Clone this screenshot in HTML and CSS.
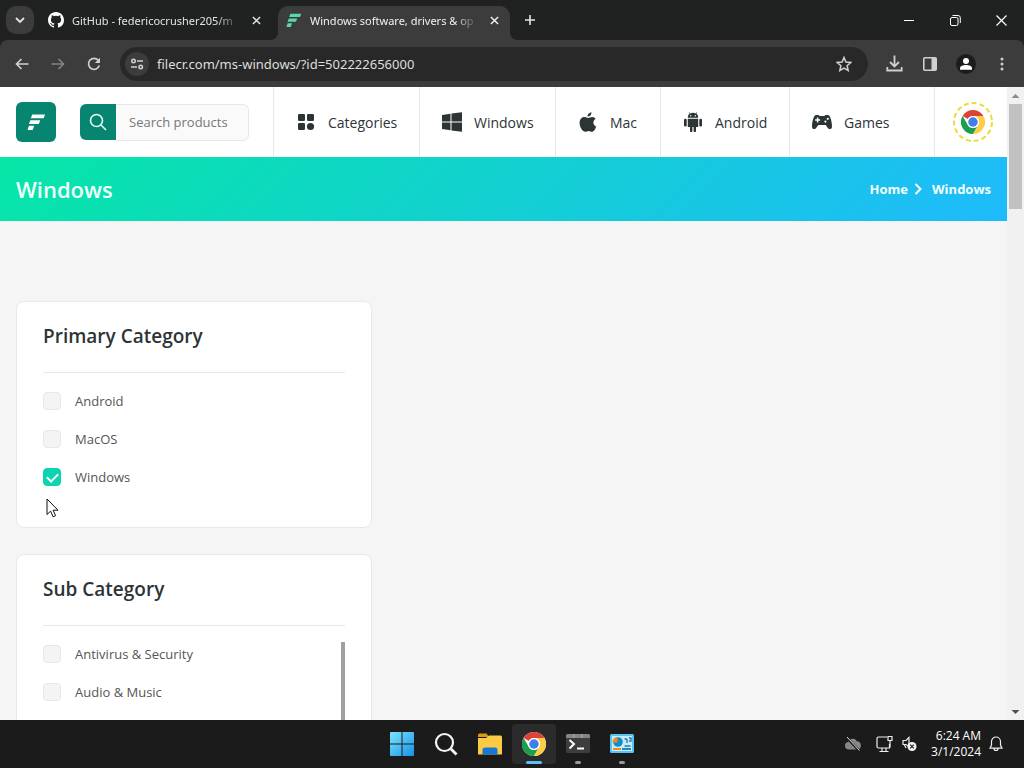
FILE: index.html
```html
<!DOCTYPE html>
<html lang="en">
<head>
<meta charset="utf-8">
<title>Windows software, drivers &amp; operating systems</title>
<link rel="stylesheet" href="styles.css">
</head>
<body>
<svg class="defs" aria-hidden="true">
  <symbol id="chrome" viewBox="0 0 48 48">
    <circle cx="24" cy="24" r="24" fill="#fff"/>
    <path d="M24 24 3.2 12A24 24 0 0 1 44.8 12H24a12 12 0 0 0-10.400 6z" fill="#dd4337"/>
    <path d="M3.200 12A24 24 0 0 0 24 48L34.400 30a12 12 0 0 1-20.800 0z" fill="#1a9f50"/>
    <path d="M44.800 12A24 24 0 0 1 24 48L34.400 30A12 12 0 0 0 24 12z" fill="#fdcd45"/>
    <circle cx="24" cy="24" r="12" fill="#fff"/>
    <circle cx="24" cy="24" r="9.500" fill="#3f7fe8"/>
  </symbol>
  <symbol id="brand" viewBox="0 0 20 18">
    <path d="M5.500 0.500H19L17.500 4.500H4zM3.500 6.500H14L12.500 10.500H2zM2 12.500H7.500L6 17H.5z"/>
  </symbol>
  <symbol id="cross" viewBox="0 0 10 10"><path d="m1 1 8 8M9 1 1 9" fill="none" stroke="currentColor" stroke-width="1.600"/></symbol>
</svg>

<header class="tabstrip">
  <button class="tab-search" aria-label="Search tabs"><svg width="10" height="7" viewBox="0 0 10 7"><path d="m1 1 4 4 4-4" fill="none" stroke="currentColor" stroke-width="1.800"/></svg></button>
  <div class="tab">
    <svg width="16" height="16" viewBox="0 0 16 16" fill="#fff"><path d="M8 0C3.580 0 0 3.580 0 8c0 3.540 2.290 6.530 5.470 7.590.4.070.55-.17.55-.38 0-.19-.01-.82-.01-1.490-2.010.37-2.530-.49-2.690-.94-.09-.23-.48-.94-.82-1.130-.28-.15-.68-.52-.01-.53.630-.01 1.080.58 1.230.82.720 1.210 1.870.87 2.330.66.070-.52.280-.87.510-1.070-1.780-.2-3.640-.89-3.640-3.950 0-.87.310-1.590.82-2.150-.08-.2-.36-1.020.080-2.120 0 0 .67-.21 2.200.82a7.600 7.600 0 0 1 4 0c1.530-1.040 2.200-.82 2.200-.82.440 1.100.160 1.920.080 2.120.510.560.820 1.270.820 2.150 0 3.070-1.870 3.750-3.650 3.950.29.250.540.730.540 1.480 0 1.070-.01 1.930-.01 2.200 0 .21.150.46.550.38A8 8 0 0 0 16 8c0-4.420-3.580-8-8-8z"/></svg>
    <span class="tab-title">GitHub - federicocrusher205/m</span>
    <button class="tab-close" aria-label="Close tab"><svg width="9" height="9"><use href="#cross"/></svg></button>
  </div>
  <div class="tab tab-active">
    <svg width="16" height="15" fill="#5fd3b0"><use href="#brand"/></svg>
    <span class="tab-title">Windows software, drivers &amp; op</span>
    <button class="tab-close" aria-label="Close tab"><svg width="9" height="9"><use href="#cross"/></svg></button>
  </div>
  <button class="new-tab" aria-label="New tab"><svg width="12" height="12" viewBox="0 0 12 12"><path d="M6 1v10M1 6h10" stroke="currentColor" stroke-width="1.600"/></svg></button>
  <div class="window-controls">
    <button aria-label="Minimize"><svg width="10" height="10" viewBox="0 0 10 10"><path d="M0 5.500h10" stroke="#fff"/></svg></button>
    <button aria-label="Restore"><svg width="11" height="11" viewBox="0 0 11 11" fill="none" stroke="#fff"><rect x=".5" y="2.500" width="7.500" height="8" rx="1.500"/><path d="M2.500.5h5.500a2.300 2.300 0 0 1 2.300 2.300V8"/></svg></button>
    <button aria-label="Close"><svg width="11" height="11" viewBox="0 0 11 11"><path d="m.5.500 10 10m0-10-10 10" stroke="#fff" stroke-width="1.200"/></svg></button>
  </div>
</header>

<div class="toolbar">
  <div class="tools">
    <button aria-label="Back"><svg width="14" height="12" viewBox="0 0 14 12"><path d="M13.500 6H1.500M6.500 1l-5 5 5 5" fill="none" stroke="currentColor" stroke-width="1.700"/></svg></button>
    <button class="dim" aria-label="Forward"><svg width="14" height="12" viewBox="0 0 14 12"><path d="M.5 6h12M7.500 1l5 5-5 5" fill="none" stroke="currentColor" stroke-width="1.700"/></svg></button>
    <button aria-label="Reload"><svg width="14" height="14" viewBox="0 0 14 14"><path d="M12.300 8.500A5.500 5.500 0 1 1 11.300 3.300L12.500 5" fill="none" stroke="currentColor" stroke-width="1.700"/><path d="M13 .8v5.200H7.800z" fill="currentColor"/></svg></button>
  </div>
  <div class="omnibox">
    <button class="site-info" aria-label="View site information"><svg width="14" height="12" viewBox="0 0 14 12" fill="none" stroke="currentColor" stroke-width="1.600"><circle cx="3.500" cy="3" r="1.700"/><path d="M7 3h6M1 9h6"/><circle cx="10.700" cy="9" r="1.700"/></svg></button>
    <input class="url" type="text" aria-label="Address" value="filecr.com/ms-windows/?id=502222656000">
    <button class="star" aria-label="Bookmark this tab"><svg width="16" height="16" viewBox="0 0 16 16"><path d="m8 1.500 1.900 4.600 4.900.4-3.700 3.200 1.100 4.800L8 12l-4.200 2.500 1.100-4.800L1.200 6.500l4.900-.4z" fill="none" stroke="currentColor" stroke-width="1.500"/></svg></button>
  </div>
  <div class="tools">
    <button aria-label="Downloads"><svg width="17" height="17" viewBox="0 0 17 17" fill="none" stroke="currentColor" stroke-width="1.800"><path d="M8.500.5v10.500M4 7l4.500 4.500L13 7M1.300 12v3.500h14.400V12"/></svg></button>
    <button aria-label="Side panel"><svg width="14" height="14" viewBox="0 0 14 14"><rect x=".8" y=".8" width="12.400" height="12.400" rx="1" fill="none" stroke="currentColor" stroke-width="1.600"/><path d="M8.500 1H13v12H8.500z" fill="currentColor"/></svg></button>
    <button aria-label="Profile"><svg width="20" height="20" viewBox="0 0 20 20"><circle cx="10" cy="10" r="10" fill="#1b1c1c"/><circle cx="10" cy="7" r="3" fill="#fff"/><path d="M4 15.800v-1.500c0-2.200 3-3.300 6-3.300s6 1.100 6 3.300v1.500z" fill="#fff"/></svg></button>
    <button aria-label="Menu"><svg width="4" height="14" viewBox="0 0 4 14" fill="currentColor"><circle cx="2" cy="2" r="1.500"/><circle cx="2" cy="7" r="1.500"/><circle cx="2" cy="12" r="1.500"/></svg></button>
  </div>
</div>

<div class="viewport">
  <div class="page">
    <header class="site-header">
      <a class="logo" href="#" aria-label="FileCR"><svg width="19" height="17" fill="#fff"><use href="#brand"/></svg></a>
      <form class="search">
        <button type="button" aria-label="Search"><svg width="18" height="18" viewBox="0 0 18 18" fill="none" stroke="#e2fff6" stroke-width="1.600"><circle cx="7.500" cy="7.500" r="6"/><path d="m12 12 5 5"/></svg></button>
        <input type="text" placeholder="Search products" aria-label="Search products">
      </form>
      <nav class="site-nav">
        <a class="w-categories" href="#"><svg width="20" height="20" viewBox="0 0 20 20"><rect x="2" y="2" width="7" height="7" rx="1.200"/><rect x="11" y="2" width="7" height="7" rx="1.200"/><rect x="2" y="11" width="7" height="7" rx="1.200"/><circle cx="14.500" cy="14.500" r="3.600"/></svg>Categories</a>
        <a class="w-windows" href="#"><svg width="20" height="20" viewBox="0 0 20 20"><path d="m0 3 8.500-1.200v7.700H0zM9.500 1.600 20 .2v9.300H9.500zM0 10.500h8.500v7.700L0 17zM9.500 10.500H20v9.300L9.500 18.400z"/></svg>Windows</a>
        <a class="w-mac" href="#"><svg width="20" height="20" viewBox="0 0 20 20"><path d="M13.500.2c.1 2.600-1.700 4.400-4 4.400C9.300 2.200 11.200.5 13.500.2zM17.500 6.900c-3.200 2-2.700 6.200.7 7.500-.7 2.200-2.300 5.300-4.300 5.300-1.200 0-1.800-.8-3.300-.8s-2.200.8-3.300.8C4.800 19.700 1.600 15.500 1.600 11c0-4 2.500-5.900 5-5.900 1.500 0 2.800.9 3.700.9 1 0 2.300-1 4-1 1.300 0 2.500.7 3.200 1.900z"/></svg>Mac</a>
        <a class="w-android" href="#"><svg width="20" height="20" viewBox="0 0 20 20"><path d="M6.700 1.600 5.800.3l.4-.3 1 1.400a7 7 0 0 1 5.600 0l1-1.400.4.300-.9 1.300C14.500 2.500 15.200 4 15.200 5.800H4.800c0-1.800.7-3.300 1.900-4.200zM4.800 6.700h10.400v8.200H13v4.100a1.200 1.200 0 0 1-2.400 0v-4.100H9.400v4.100a1.200 1.200 0 0 1-2.400 0v-4.100H4.800z"/><rect x="1" y="6.700" width="2.700" height="7.800" rx="1.200"/><rect x="16.300" y="6.700" width="2.700" height="7.800" rx="1.200"/><circle cx="7.700" cy="3.700" r=".7" fill="#fff"/><circle cx="12.300" cy="3.700" r=".7" fill="#fff"/></svg>Android</a>
        <a class="w-games" href="#"><svg width="20" height="20" viewBox="0 0 20 20"><path d="M4 3h2.500l1.200 1h4.600l1.200-1H16c2 0 4 6 4 11.500 0 3-3 3.500-4.500 1L13.700 13H6.300l-1.800 2.500c-1.500 2.500-4.500 2-4.500-1C0 9 2 3 4 3z"/><path d="M5.600 5.500v5M3.100 8h5" stroke="#fff" stroke-width="1.500"/><circle cx="15.800" cy="6.800" r="1.100" fill="#fff"/><circle cx="13.400" cy="9.600" r="1.100" fill="#fff"/></svg>Games</a>
        <a class="w-extension" href="#" aria-label="Chrome extension"><svg width="42" height="42" viewBox="0 0 42 42"><circle cx="21" cy="21" r="19" fill="none" stroke="#eddc38" stroke-width="2" stroke-dasharray="5 2.960"/><use href="#chrome" x="9" y="9" width="24" height="24"/></svg></a>
      </nav>
    </header>
    <section class="banner">
      <h1>Windows</h1>
      <nav class="crumbs" aria-label="Breadcrumb"><a href="#">Home</a><svg width="8" height="12" viewBox="0 0 8 12"><path d="m1.500 1 5 5-5 5" fill="none" stroke="#fff" stroke-width="2"/></svg><a class="current" href="#">Windows</a></nav>
    </section>
    <main class="filters">
      <section class="card">
        <h2>Primary Category</h2>
        <div class="options">
          <label><input type="checkbox">Android</label>
          <label><input type="checkbox">MacOS</label>
          <label><input type="checkbox" checked>Windows</label>
        </div>
      </section>
      <section class="card">
        <h2>Sub Category</h2>
        <div class="scroll-list">
          <div class="options">
            <label><input type="checkbox">Antivirus &amp; Security</label>
            <label><input type="checkbox">Audio &amp; Music</label>
          </div>
          <div class="list-bar"></div>
        </div>
      </section>
    </main>
  </div>
  <div class="scrollbar" aria-hidden="true">
    <svg width="17" height="17" viewBox="0 0 17 17"><path d="m4.500 11 4-4 4 4z" fill="#8b8b8b"/></svg>
    <div class="thumb"></div>
    <svg width="17" height="17" viewBox="0 0 17 17"><path d="m4.500 7 4 4 4-4z" fill="#505050"/></svg>
  </div>
</div>

<footer class="taskbar">
  <div class="apps">
    <button aria-label="Start"><svg width="24" height="24" viewBox="0 0 24 24"><defs><linearGradient id="win" x2="1" y2="1"><stop stop-color="#7de6fb"/><stop offset="1" stop-color="#1590e8"/></linearGradient></defs><path d="M1 0h10.500v11.500H0V1a1 1 0 0 1 1-1zM12.500 0H23a1 1 0 0 1 1 1v10.500H12.500zM0 12.500h11.500V24H1a1 1 0 0 1-1-1zM12.500 12.500H24V23a1 1 0 0 1-1 1H12.500z" fill="url(#win)"/></svg></button>
    <button aria-label="Search"><svg width="24" height="24" viewBox="0 0 24 24" fill="none" stroke="#f5f5f5"><circle cx="10.500" cy="10.500" r="8.500" stroke-width="2.200"/><path d="m17 17 5.500 5.500" stroke-width="2.800"/></svg></button>
    <button aria-label="File Explorer"><svg width="26" height="24" viewBox="0 0 26 24"><path d="M1 3a1.500 1.500 0 0 1 1.500-1.500h7L12 5H1z" fill="#d99b16"/><path d="M1 6h8l3-2.500h11.500A1.500 1.500 0 0 1 25 5v17.500H1z" fill="#fbcb45"/><path d="M5.500 22.500V18a2.500 2.500 0 0 1 2.500-2.500h10a2.500 2.500 0 0 1 2.500 2.500v4.500z" fill="#1678d2"/></svg></button>
    <button class="running focused" aria-label="Google Chrome"><svg width="24" height="24"><use href="#chrome"/></svg></button>
    <button class="running" aria-label="Terminal"><svg width="24" height="20" viewBox="0 0 24 20"><rect width="24" height="19" rx="1.500" fill="#3d3d3d"/><path d="M0 4V1.500A1.500 1.500 0 0 1 1.500 0h21A1.500 1.500 0 0 1 24 1.500V4z" fill="#858585"/><path d="M8 0v4M16 0v4" stroke="#aaa"/><path d="m3.500 6 4.500 4-4.500 4.500M11 14.500h7" fill="none" stroke="#fff" stroke-width="2"/></svg></button>
    <button class="running" aria-label="Control Panel"><svg width="24" height="20" viewBox="0 0 24 20"><rect width="24" height="19" rx="1.500" fill="#59c3f0"/><rect x="2" y="2" width="20" height="15" fill="#c7edfb"/><circle cx="8" cy="8" r="4.800" fill="#168bc7"/><path d="M7.500 8.500V3a5 5 0 0 0-5 5.500z" fill="#f08b21"/><path d="M14.500 5h2.500m0 0v4m2-5h2v3h-2m-4.500 5h6" fill="none" stroke="#2877b8" stroke-width="1.400"/><path d="M3 15h8" stroke="#f08b21" stroke-width="2"/><path d="M12 15h9" stroke="#168bc7" stroke-width="2"/></svg></button>
  </div>
  <div class="tray">
    <svg class="cloud" width="18" height="14" viewBox="0 0 18 14"><path d="M4.500 12.500a3.800 3.800 0 0 1-.5-7.500 5 5 0 0 1 9-.8 4.200 4.200 0 0 1 .5 8.300z" fill="#878787"/><path d="m2 0 13 13.500" stroke="#1b1b1b" stroke-width="2.500"/><path d="m3 0 12.500 13.500" stroke="#ddd"/></svg>
    <svg width="18" height="18" viewBox="0 0 18 18" fill="none" stroke="#eee" stroke-width="1.200"><path d="M11 2H2.500A1.500 1.500 0 0 0 1 3.500v8A1.500 1.500 0 0 0 2.500 13H13.500V9M6 13v3.500M10 13v3.500M3.500 16.500h9"/><path d="M12 1.500h4v4h-4zM14 5.500v7"/></svg>
    <svg width="15" height="16" viewBox="0 0 15 16"><path d="M7 1.500v9L4 8.500H1v-4h3zM2.500 9l1.500 3" fill="none" stroke="#eee" stroke-width="1.200"/><circle cx="10" cy="10.500" r="4.500" fill="#f4f4f4"/><path d="m8.200 8.700 3.600 3.600m0-3.600-3.600 3.600" stroke="#222" stroke-width="1.200"/></svg>
    <time datetime="2024-03-01T06:24">6:24 AM<br>3/1/2024</time>
    <svg width="14" height="16" viewBox="0 0 14 16" fill="none" stroke="#eee" stroke-width="1.200"><path d="M1 12.200 2.500 9V5.500a4.500 4.500 0 0 1 9 0V9l1.500 3.200zM5 12.500a2 2 0 0 0 4 0"/></svg>
  </div>
</footer>

<svg class="cursor" width="13" height="20" viewBox="0 0 13 20" aria-hidden="true"><path d="M1 1v15.500l3.600-3.400 2.500 5.700 2.500-1.100-2.500-5.500H12z" fill="#fff" stroke="#111"/></svg>
</body>
</html>
```
FILE: styles.css
```css
* { box-sizing: border-box; }

body {
  margin: 0;
  height: 100vh;
  display: flex;
  flex-direction: column;
  overflow: hidden;
  font-family: "Open Sans", "Noto Sans", sans-serif;
  font-size: 13px;
  background: #202221;
}

button {
  border: 0;
  padding: 0;
  background: none;
  color: inherit;
  font: inherit;
  display: flex;
  align-items: center;
  justify-content: center;
}

a { color: inherit; text-decoration: none; }
svg { display: block; flex-shrink: 0; }
.defs { position: absolute; width: 0; height: 0; }

/* Browser tabs */
.tabstrip {
  display: flex;
  height: 40px;
  padding: 6px 0 0 6px;
  color: #e3e3e3;
  flex-shrink: 0;
}

.tab-search {
  width: 28px;
  height: 28px;
  border-radius: 10px;
  background: #3c3c3c;
  margin-right: 6px;
}

.tab {
  display: flex;
  align-items: center;
  width: 232px;
  height: 34px;
  padding: 0 8px 6px;
  font-family: "Noto Sans", sans-serif;
  font-size: 11px;
}

.tab-title {
  flex: 1;
  margin-left: 8px;
  overflow: hidden;
  white-space: nowrap;
  mask-image: linear-gradient(90deg, #000 86%, transparent);
}

.tab-close { width: 16px; height: 16px; margin-left: 8px; }

.tab-active {
  position: relative;
  margin-left: 6px;
  border-radius: 10px 10px 0 0;
  background: #3c3c3c;
  color: #f1f1f1;
}

.tab-active::before,
.tab-active::after {
  content: "";
  position: absolute;
  bottom: 0;
  width: 8px;
  height: 8px;
}

.tab-active::before { right: 100%; background: radial-gradient(circle at 0 0, transparent 8px, #3c3c3c 8px); }
.tab-active::after { left: 100%; background: radial-gradient(circle at 100% 0, transparent 8px, #3c3c3c 8px); }

.new-tab { width: 28px; height: 28px; margin-left: 6px; }
.window-controls { display: flex; margin-left: auto; height: 28px; }
.window-controls button { width: 46px; }

/* Browser toolbar */
.toolbar {
  display: flex;
  align-items: center;
  gap: 8px;
  height: 47px;
  padding: 0 4px;
  flex-shrink: 0;
  border-radius: 8px 8px 0 0;
  background: #3c3c3c;
  color: #cfcfcf;
}

.tools { display: flex; }
.tools button { width: 36px; height: 34px; }
.tools .dim { color: #828282; }

.omnibox {
  flex: 1;
  display: flex;
  align-items: center;
  height: 34px;
  padding: 0 12px 0 5px;
  border-radius: 17px;
  background: #282828;
}

.site-info { width: 24px; height: 24px; border-radius: 50%; background: #3c3c3c; }

.url {
  flex: 1;
  min-width: 0;
  margin-left: 8px;
  padding: 0;
  border: 0;
  outline: 0;
  background: none;
  color: #dedede;
  font: 13px/20px "Noto Sans", sans-serif;
}

.star { width: 24px; height: 24px; }

/* Web page */
.viewport { flex: 1; min-height: 0; display: flex; background: #f5f5f5; }
.page { flex: 1; min-width: 0; overflow: hidden; }

.site-header {
  display: flex;
  align-items: center;
  height: 70px;
  padding-left: 16px;
  background: #fff;
}

.logo {
  display: flex;
  align-items: center;
  justify-content: center;
  width: 40px;
  height: 40px;
  border-radius: 6px;
  background: #078571;
}

.search { display: flex; width: 169px; height: 37px; margin: 0 24px; }
.search button { width: 36px; height: 36px; border-radius: 6px 0 0 6px; background: #078571; }

.search input {
  flex: 1;
  min-width: 0;
  border: 1px solid #e8e8e8;
  border-left: 0;
  border-radius: 0 6px 6px 0;
  padding: 0 0 0 13px;
  background: #fafafa;
  font: 13px/20px "Open Sans", "Noto Sans", sans-serif;
}

.search input::placeholder { color: #777; opacity: 1; }

.site-nav { flex: 1; display: flex; height: 100%; }

.site-nav a {
  display: flex;
  align-items: center;
  gap: 12px;
  padding-left: 22px;
  border-left: 1px solid #e8e8e8;
  font-size: 14px;
  font-weight: 500;
  color: #2d3436;
  fill: #2d3436;
}

.site-nav .w-categories { flex: 1 1 146px; }
.site-nav .w-windows { flex: 1 1 136px; }
.site-nav .w-mac { flex: 1 1 105px; }
.site-nav .w-android { flex: 1 1 129px; }
.site-nav .w-games { flex: 1 1 145px; }
.site-nav .w-extension { flex: 1 1 73px; padding-left: 17px; }

.banner {
  display: flex;
  align-items: center;
  justify-content: space-between;
  height: 64px;
  padding: 0 16px;
  background: linear-gradient(135deg, #06e6a6, #1fbafc);
  color: #f2fffc;
}

h1 { margin: 0; font-size: 22px; line-height: 32px; font-weight: 600; }

.crumbs { display: flex; align-items: center; gap: 6px; font-size: 13px; font-weight: 700; }
.crumbs .current { margin-left: 4px; }

.filters {
  display: flex;
  flex-direction: column;
  gap: 26px;
  width: 356px;
  margin: 80px 0 0 16px;
}

.card {
  padding: 20px 26px 40px;
  border: 1px solid #e9e9e9;
  border-radius: 8px;
  background: #fff;
}

h2 {
  margin: 0;
  padding-bottom: 22px;
  border-bottom: 1px solid #e8e8e8;
  font-size: 19px;
  line-height: 28px;
  font-weight: 600;
  color: #2d3436;
}

.options { display: flex; flex-direction: column; gap: 18px; padding-top: 18px; }

.options label {
  display: flex;
  align-items: center;
  gap: 14px;
  font-size: 13px;
  line-height: 20px;
  font-weight: 500;
  color: #555;
}

.options input {
  appearance: none;
  width: 18px;
  height: 18px;
  margin: 0;
  border: 1px solid #e8e8e8;
  border-radius: 4px;
  background: #f4f4f4;
}

.options input:checked { display: grid; place-items: center; border-color: #0cd3b0; background: #0cd3b0; }

.options input:checked::after {
  content: "";
  width: 9px;
  height: 5px;
  border: solid #fff;
  border-width: 0 0 2px 2px;
  transform: translateY(-1px) rotate(-45deg);
}

.scroll-list { display: flex; justify-content: space-between; min-height: 240px; }
.list-bar { width: 4px; margin-top: 16px; background: #a0a0a0; }

.scrollbar {
  display: flex;
  flex-direction: column;
  width: 17px;
  background: #f1f1f1;
}

.thumb { height: 105px; margin: 0 2px auto; background: #c1c1c1; }

/* Windows taskbar */
.taskbar {
  display: grid;
  grid-template-columns: 1fr auto 1fr;
  height: 48px;
  flex-shrink: 0;
  background: #1b1b1b;
  color: #fff;
}

.apps { grid-column: 2; display: flex; align-items: center; }
.apps button { position: relative; width: 44px; height: 40px; }
.focused { border-radius: 4px; background: #2b2b2b; }

.running::after {
  content: "";
  position: absolute;
  bottom: 0;
  left: calc(50% - 3px);
  width: 6px;
  height: 3px;
  border-radius: 2px;
  background: #999;
}

.apps .focused::after { left: calc(50% - 8px); width: 16px; background: #5ebdf2; }

.tray {
  display: flex;
  align-items: center;
  justify-content: flex-end;
  gap: 8px;
  padding-right: 21px;
}

.tray .cloud { margin-right: 6px; }
.tray time { font-size: 12px; line-height: 16px; text-align: right; margin-left: 6px; }

.cursor { position: absolute; left: 46px; top: 498px; }
```
